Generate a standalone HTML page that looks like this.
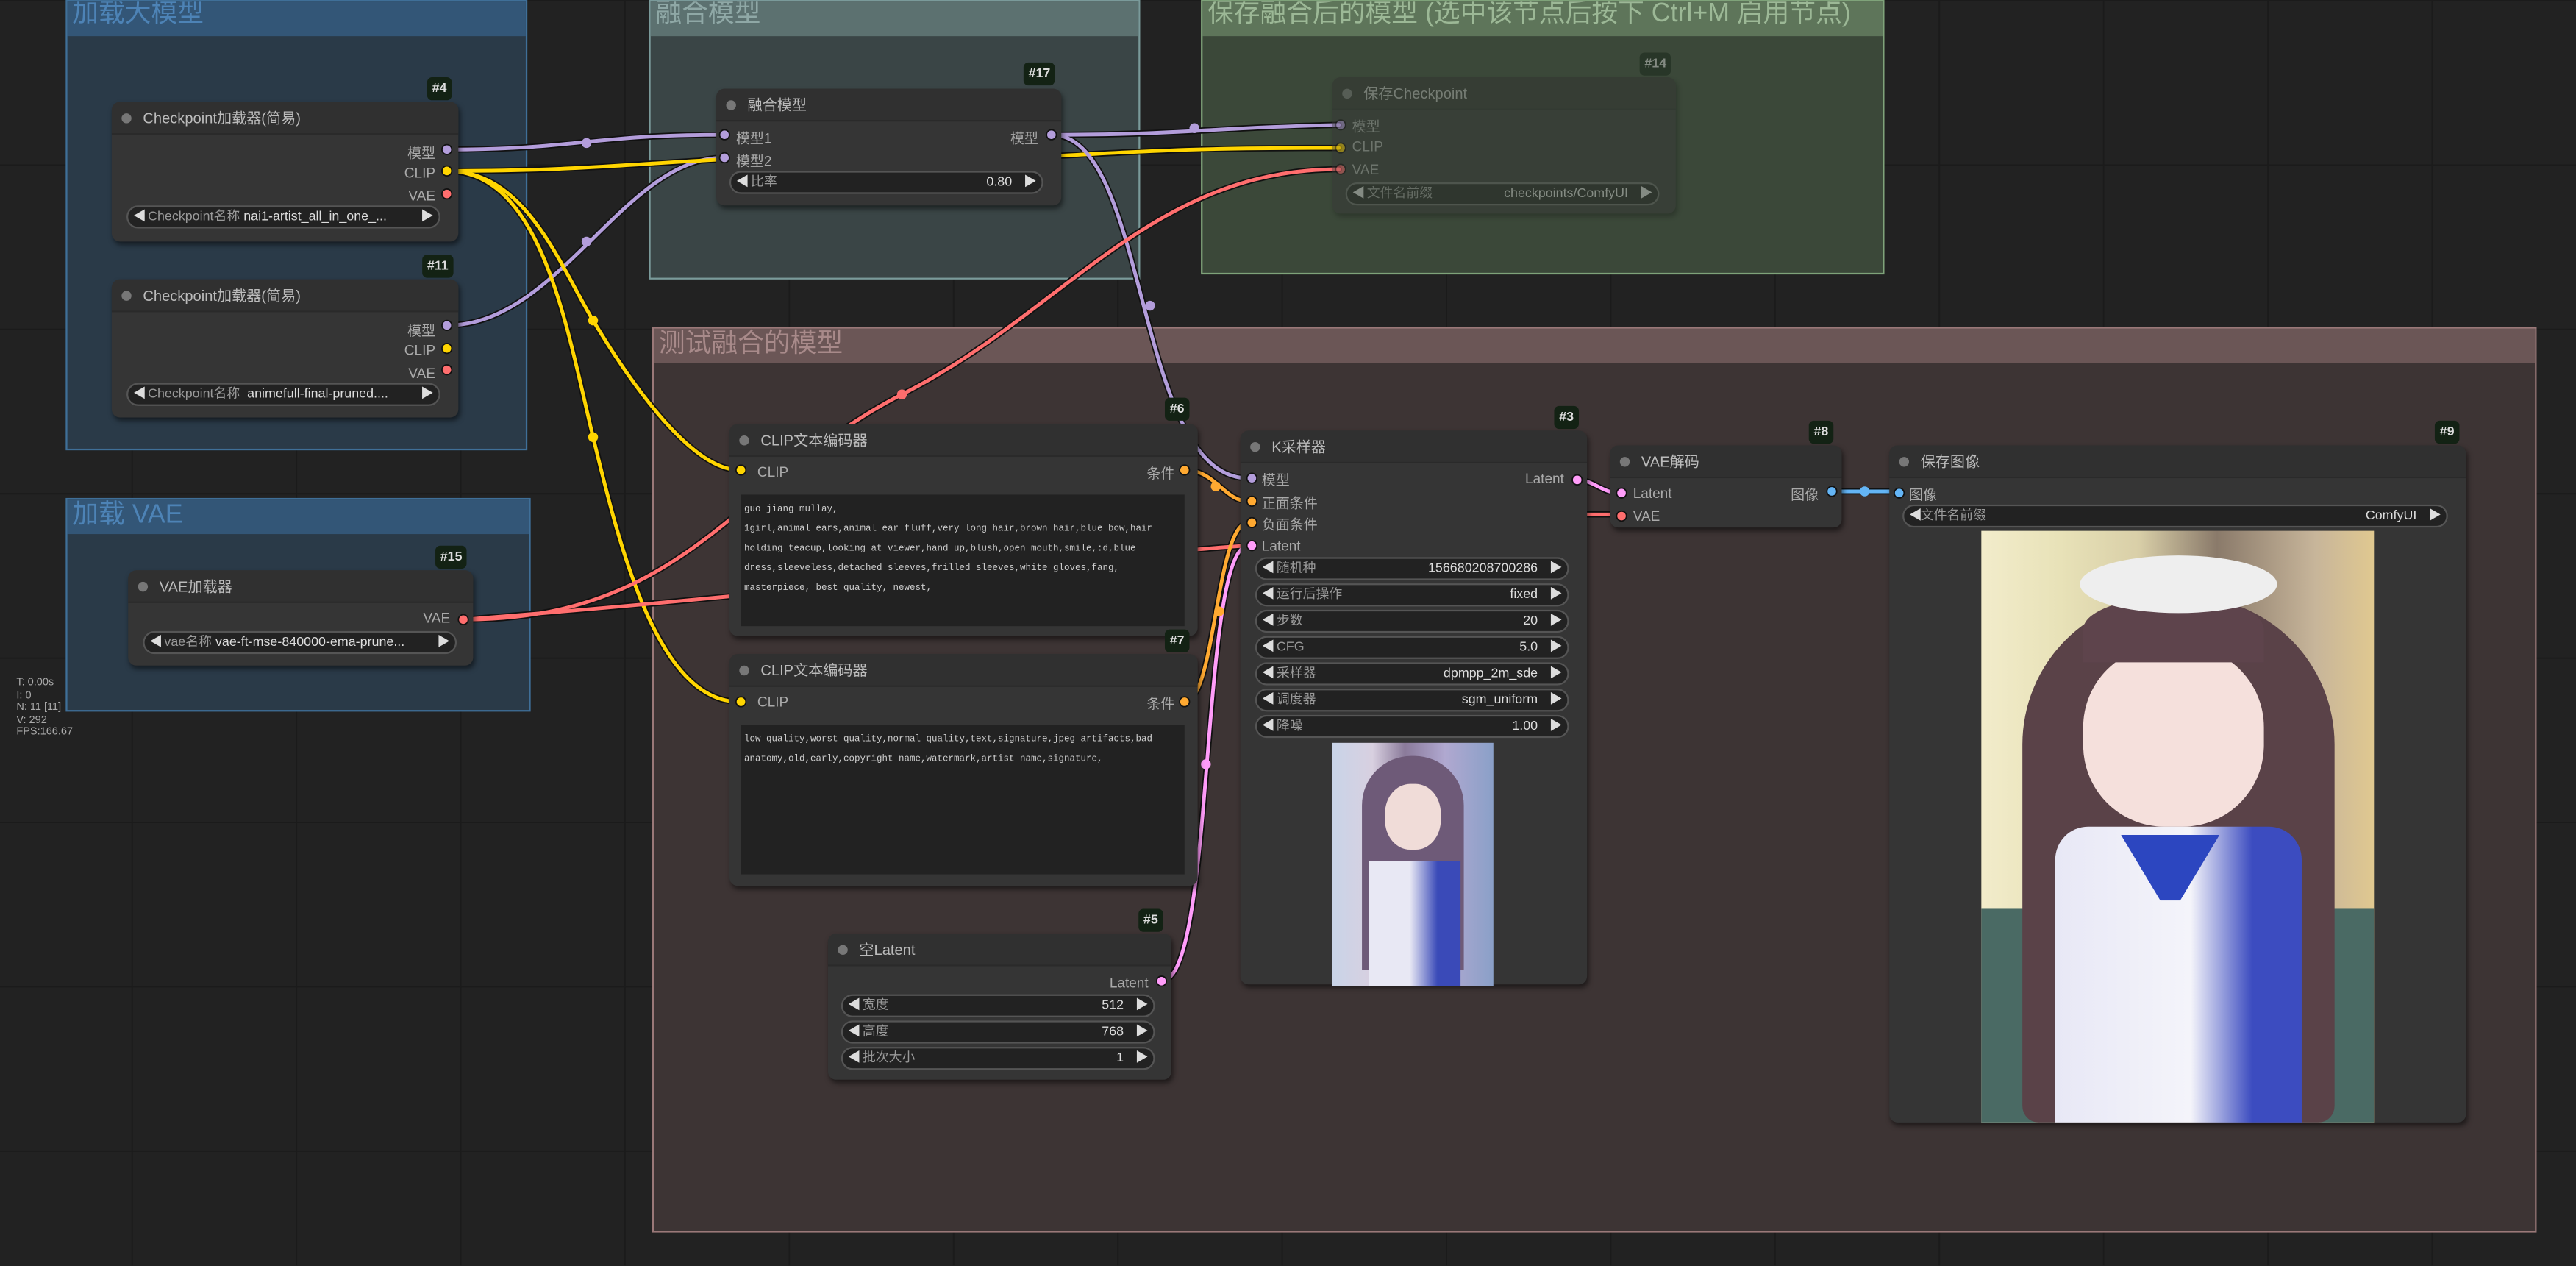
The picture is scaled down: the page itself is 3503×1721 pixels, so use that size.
<!DOCTYPE html>
<html><head><meta charset="utf-8"><style>
*{margin:0;padding:0;box-sizing:border-box}
body{width:3503px;height:1721px;overflow:hidden;background:#222;font-family:"Liberation Sans","Noto Sans CJK SC",sans-serif}
#s{position:absolute;left:0;top:0;width:1568px;height:770px;transform:scale(2.2341);transform-origin:0 0;
background-color:#222;background-image:linear-gradient(#1b1b1b 1px,transparent 1px),linear-gradient(90deg,#1b1b1b 1px,transparent 1px);background-size:100px 100px;background-position:-20px 0}
.a{position:absolute}
.g{position:absolute}
.g .h{height:21px;font-size:16px;line-height:16px;padding-left:3px;white-space:nowrap;overflow:hidden}
.n{position:absolute;background:#353535;border-radius:5px;box-shadow:1px 2px 3px rgba(0,0,0,.5);color:#aaa;font-size:8.5px}
.n .t{height:20px;background:#303030;border-radius:5px 5px 0 0;padding-left:19px;line-height:20px;color:#bbb;font-size:9px;border-bottom:1px solid #2a2a2a;position:relative}
.n .t:before{content:"";position:absolute;left:6px;top:7px;width:6px;height:6px;border-radius:50%;background:#777}
.b{position:absolute;background:#132214;color:#ddd;font-size:8px;font-weight:bold;padding:2px 3px;border-radius:3px;line-height:10px}
.w{position:absolute;height:14px;background:#222;border:1px solid #555;border-radius:7px;font-size:8px;color:#999;line-height:12px;padding:0 12px 0 12px;white-space:nowrap;overflow:hidden}
.w:before{content:"◀";position:absolute;left:3px;color:#ddd;font-size:8px}
.w:after{content:"▶";position:absolute;right:3px;top:0;color:#ddd;font-size:8px}
.w b{font-weight:normal;color:#ddd;position:absolute;right:18px}
.l{position:absolute;font-size:8.5px;color:#aaa;white-space:nowrap}
.tx{position:absolute;background:#222;font-family:"Liberation Mono","Noto Sans CJK SC",monospace;font-size:5.6px;color:#ccc;line-height:12px;padding:3px 2px;overflow:hidden}
</style></head><body><div id="s">
<div class="g" style="left:40px;top:0;width:281px;height:274px;background:#2a3a48;border:1px solid #3f6f98"><div class="h" style="background:#335677;color:#4d83b6">加载大模型</div></div>
<div class="g" style="left:395px;top:0;width:299px;height:170px;background:#3a4546;border:1px solid #7a9a9a"><div class="h" style="background:#5c7170;color:#8fa8a6">融合模型</div></div>
<div class="g" style="left:731px;top:0;width:416px;height:167px;background:#3b4839;border:1px solid #7fa37a"><div class="h" style="background:#5e755a;color:#9cb896">保存融合后的模型 (选中该节点后按下 Ctrl+M 启用节点)</div></div>
<div class="g" style="left:397px;top:199px;width:1147px;height:551px;background:#3d3434;border:1px solid #9a7878"><div class="h" style="background:#6b5656;color:#a88a8a;height:21px;padding-top:2px">测试融合的模型</div></div>
<div class="g" style="left:40px;top:303px;width:283px;height:130px;background:#2a3a48;border:1px solid #3f6f98"><div class="h" style="background:#335677;color:#4d83b6;padding-top:2px">加载 VAE</div></div>
<div class="a" style="left:10px;top:412px;font-size:6.5px;color:#aaa;line-height:7.6px">T: 0.00s<br>I: 0<br>N: 11 [11]<br>V: 292<br>FPS:166.67</div>

<svg class="a" style="left:0;top:0" width="1568" height="770" fill="none" stroke-linecap="round">
<defs>
<path id="p1" d="M272 91C350 91 360 82 440 82"/>
<path id="p2" d="M272 198C340 198 380 96 440 96"/>
<path id="p3" d="M272 104C350 104 380 100 440 97"/>
<path id="p4" d="M272 104C320 104 340 160 361 195S420 286 450 286"/>
<path id="p5" d="M272 104C330 104 345 200 361 266S400 427 450 427"/>
<path id="p6" d="M640 95C700 92 720 90 815 90"/>
<path id="p7" d="M640 82C720 82 730 78 815 76"/>
<path id="p8" d="M640 82C700 82 690 291 760 291"/>
<path id="p9" d="M282 377C420 377 450 290 549 240S700 103 815 103"/>
<path id="p10" d="M282 377C500 360 700 335 760 332"/>
<path id="p11" d="M966 313L986 313"/>
<path id="p12" d="M721 286C740 286 745 305 760 305"/>
<path id="p13" d="M721 427C740 427 740 318 760 318"/>
<path id="p14" d="M707 597C740 597 730 332 760 332"/>
<path id="p15" d="M960 292C970 292 975 300 986 300"/>
<path id="p16" d="M1115 299L1155 299"/>
</defs>
<g stroke="#111" stroke-width="3.8">
<use href="#p1"/><use href="#p2"/><use href="#p3"/><use href="#p4"/><use href="#p5"/><use href="#p6"/><use href="#p7"/><use href="#p8"/><use href="#p9"/><use href="#p10"/><use href="#p11"/><use href="#p12"/><use href="#p13"/><use href="#p14"/><use href="#p15"/><use href="#p16"/>
</g>
<g stroke-width="2.2">
<use href="#p1" stroke="#b39ddb"/><use href="#p2" stroke="#b39ddb"/><use href="#p3" stroke="#ffd500"/><use href="#p4" stroke="#ffd500"/><use href="#p5" stroke="#ffd500"/><use href="#p6" stroke="#ffd500"/><use href="#p7" stroke="#b39ddb"/><use href="#p8" stroke="#b39ddb"/><use href="#p9" stroke="#ff6e6e"/><use href="#p10" stroke="#ff6e6e"/><use href="#p11" stroke="#ff6e6e"/><use href="#p12" stroke="#ffa931"/><use href="#p13" stroke="#ffa931"/><use href="#p14" stroke="#ff9cf9"/><use href="#p15" stroke="#ff9cf9"/><use href="#p16" stroke="#64b5f6"/>
</g>
<g fill="#b39ddb"><circle cx="357" cy="87" r="3"/><circle cx="357" cy="147" r="3"/><circle cx="727" cy="78" r="3"/><circle cx="700" cy="186" r="3"/></g>
<g fill="#ffd500"><circle cx="361" cy="195" r="3"/><circle cx="361" cy="266" r="3"/></g>
<circle cx="549" cy="240" r="3" fill="#ff6e6e"/><circle cx="740" cy="296" r="3" fill="#ffa931"/><circle cx="742" cy="372" r="3" fill="#ffa931"/><circle cx="734" cy="465" r="3" fill="#ff9cf9"/><circle cx="1135" cy="299" r="3" fill="#64b5f6"/>
</svg>

<div class="b" style="left:260px;top:47px">#4</div>
<div class="n" style="left:68px;top:62px;width:211px;height:85px"><div class="t">Checkpoint加载器(简易)</div>
<div class="l" style="right:14px;top:25px">模型</div><div class="l" style="right:14px;top:38px">CLIP</div><div class="l" style="right:14px;top:52px">VAE</div>
<div class="w" style="left:9px;top:63px;width:191px">Checkpoint名称 <span style="color:#ddd">nai1-artist_all_in_one_...</span></div></div>
<div class="b" style="left:257px;top:155px">#11</div>
<div class="n" style="left:68px;top:170px;width:211px;height:84px"><div class="t">Checkpoint加载器(简易)</div>
<div class="l" style="right:14px;top:25px">模型</div><div class="l" style="right:14px;top:38px">CLIP</div><div class="l" style="right:14px;top:52px">VAE</div>
<div class="w" style="left:9px;top:63px;width:191px">Checkpoint名称 &nbsp;<span style="color:#ddd">animefull-final-pruned....</span></div></div>
<div class="b" style="left:623px;top:38px">#17</div>
<div class="n" style="left:436px;top:54px;width:210px;height:71px"><div class="t">融合模型</div>
<div class="l" style="left:12px;top:24px">模型1</div><div class="l" style="left:12px;top:38px">模型2</div><div class="l" style="right:14px;top:24px">模型</div>
<div class="w" style="left:8px;top:50px;width:191px">比率<b>0.80</b></div></div>
<div style="opacity:.45">
<div class="b" style="left:998px;top:32px">#14</div>
<div class="n" style="left:811px;top:47px;width:209px;height:83px"><div class="t">保存Checkpoint</div>
<div class="l" style="left:12px;top:24px">模型</div><div class="l" style="left:12px;top:37px">CLIP</div><div class="l" style="left:12px;top:51px">VAE</div>
<div class="w" style="left:8px;top:64px;width:191px;border-color:#666">文件名前缀<b>checkpoints/ComfyUI</b></div></div></div>
<div class="b" style="left:265px;top:332px">#15</div>
<div class="n" style="left:78px;top:347px;width:210px;height:58px"><div class="t">VAE加载器</div>
<div class="l" style="right:14px;top:24px">VAE</div>
<div class="w" style="left:9px;top:37px;width:191px">vae名称 <span style="color:#ddd">vae-ft-mse-840000-ema-prune...</span></div></div>
<div class="b" style="left:709px;top:242px">#6</div>
<div class="n" style="left:444px;top:258px;width:285px;height:129px"><div class="t">CLIP文本编码器</div>
<div class="l" style="left:17px;top:24px">CLIP</div><div class="l" style="right:14px;top:24px">条件</div>
<div class="tx" style="left:7px;top:43px;width:270px;height:80px">guo jiang mullay,<br>1girl,animal ears,animal ear fluff,very long hair,brown hair,blue bow,hair<br>holding teacup,looking at viewer,hand up,blush,open mouth,smile,:d,blue<br>dress,sleeveless,detached sleeves,frilled sleeves,white gloves,fang,<br>masterpiece, best quality, newest,</div></div>
<div class="b" style="left:709px;top:383px">#7</div>
<div class="n" style="left:444px;top:398px;width:285px;height:141px"><div class="t">CLIP文本编码器</div>
<div class="l" style="left:17px;top:24px">CLIP</div><div class="l" style="right:14px;top:24px">条件</div>
<div class="tx" style="left:7px;top:43px;width:270px;height:91px">low quality,worst quality,normal quality,text,signature,jpeg artifacts,bad<br>anatomy,old,early,copyright name,watermark,artist name,signature,</div></div>
<div class="b" style="left:693px;top:553px">#5</div>
<div class="n" style="left:504px;top:568px;width:209px;height:89px"><div class="t">空Latent</div>
<div class="l" style="right:14px;top:25px">Latent</div>
<div class="w" style="left:8px;top:37px;width:191px">宽度<b>512</b></div>
<div class="w" style="left:8px;top:53px;width:191px">高度<b>768</b></div>
<div class="w" style="left:8px;top:69px;width:191px">批次大小<b>1</b></div></div>
<div class="b" style="left:946px;top:247px">#3</div>
<div class="n" style="left:755px;top:262px;width:211px;height:337px"><div class="t">K采样器</div>
<div class="l" style="left:13px;top:24px">模型</div><div class="l" style="left:13px;top:38px">正面条件</div><div class="l" style="left:13px;top:51px">负面条件</div><div class="l" style="left:13px;top:65px">Latent</div>
<div class="l" style="right:14px;top:24px">Latent</div>
<div class="w" style="left:9px;top:77px;width:191px">随机种<b>156680208700286</b></div>
<div class="w" style="left:9px;top:93px;width:191px">运行后操作<b>fixed</b></div>
<div class="w" style="left:9px;top:109px;width:191px">步数<b>20</b></div>
<div class="w" style="left:9px;top:125px;width:191px">CFG<b>5.0</b></div>
<div class="w" style="left:9px;top:141px;width:191px">采样器<b>dpmpp_2m_sde</b></div>
<div class="w" style="left:9px;top:157px;width:191px">调度器<b>sgm_uniform</b></div>
<div class="w" style="left:9px;top:173px;width:191px">降噪<b>1.00</b></div>
<div class="a" style="left:56px;top:190px;width:98px;height:148px;overflow:hidden;background:linear-gradient(90deg,#c9d4e8,#d8d0e0 25%,#8a7a9a 45%,#b0a8d0 70%,#8aa0c8)">
<div class="a" style="left:18px;top:8px;width:62px;height:130px;border-radius:30px 30px 0 0;background:#6e5a78"></div>
<div class="a" style="left:32px;top:25px;width:34px;height:40px;border-radius:45%;background:#f0dcd8"></div>
<div class="a" style="left:22px;top:72px;width:56px;height:76px;background:linear-gradient(90deg,#e8e8f4 45%,#3a4ab8 75%)"></div></div></div>
<div class="b" style="left:1101px;top:256px">#8</div>
<div class="n" style="left:980px;top:271px;width:141px;height:50px"><div class="t">VAE解码</div>
<div class="l" style="left:14px;top:24px">Latent</div><div class="l" style="left:14px;top:38px">VAE</div><div class="l" style="right:14px;top:24px">图像</div></div>
<div class="b" style="left:1482px;top:256px">#9</div>
<div class="n" style="left:1150px;top:271px;width:351px;height:412px"><div class="t">保存图像</div>
<div class="l" style="left:12px;top:24px">图像</div>
<div class="w" style="left:8px;top:36px;width:332px;padding-left:10px">文件名前缀<b>ComfyUI</b></div>
<div class="a" style="left:56px;top:52px;width:239px;height:360px;overflow:hidden;background:linear-gradient(90deg,#f2eccb,#e8e2b8 20%,#d9cfa8 40%,#8a7a6a 60%,#c7b59a 85%,#e0c890)">
<div class="a" style="left:0;top:230px;width:239px;height:130px;background:#4a6a64"></div>
<div class="a" style="left:25px;top:40px;width:190px;height:320px;border-radius:90px 90px 10px 10px;background:#5a4248"></div>
<div class="a" style="left:62px;top:70px;width:110px;height:110px;border-radius:45%;background:#f5e0dc"></div>
<div class="a" style="left:62px;top:40px;width:110px;height:40px;border-radius:50% 50% 0 0;background:#5e444c"></div>
<div class="a" style="left:60px;top:15px;width:120px;height:35px;border-radius:50%;background:#eee"></div>
<div class="a" style="left:45px;top:180px;width:150px;height:180px;border-radius:20px 20px 0 0;background:linear-gradient(90deg,#e8e8f6,#f4f4fa 55%,#3c4cc0 80%)"></div>
<div class="a" style="left:85px;top:185px;width:60px;height:40px;background:#2c46c0;clip-path:polygon(0 0,100% 0,60% 100%,40% 100%)"></div></div></div>

<svg class="a" style="left:0;top:0" width="1568" height="770">
<g stroke="#111" stroke-width=".8">
<circle cx="272" cy="91" r="3" fill="#b39ddb"/><circle cx="272" cy="104" r="3" fill="#ffd500"/><circle cx="272" cy="118" r="3" fill="#ff6e6e"/>
<circle cx="272" cy="198" r="3" fill="#b39ddb"/><circle cx="272" cy="212" r="3" fill="#ffd500"/><circle cx="272" cy="225" r="3" fill="#ff6e6e"/>
<circle cx="441" cy="82" r="3" fill="#b39ddb"/><circle cx="441" cy="96" r="3" fill="#b39ddb"/><circle cx="640" cy="82" r="3" fill="#b39ddb"/>
<circle cx="282" cy="377" r="3" fill="#ff6e6e"/>
<circle cx="451" cy="286" r="3" fill="#ffd500"/><circle cx="721" cy="286" r="3" fill="#ffa931"/>
<circle cx="451" cy="427" r="3" fill="#ffd500"/><circle cx="721" cy="427" r="3" fill="#ffa931"/>
<circle cx="707" cy="597" r="3" fill="#ff9cf9"/>
<circle cx="762" cy="291" r="3" fill="#b39ddb"/><circle cx="762" cy="305" r="3" fill="#ffa931"/><circle cx="762" cy="318" r="3" fill="#ffa931"/><circle cx="762" cy="332" r="3" fill="#ff9cf9"/><circle cx="960" cy="292" r="3" fill="#ff9cf9"/>
<circle cx="987" cy="300" r="3" fill="#ff9cf9"/><circle cx="987" cy="314" r="3" fill="#ff6e6e"/><circle cx="1115" cy="299" r="3" fill="#64b5f6"/><circle cx="1156" cy="300" r="3" fill="#64b5f6"/>
</g>
<g opacity=".45" stroke="#111" stroke-width=".8"><circle cx="816" cy="76" r="3" fill="#b39ddb"/><circle cx="816" cy="90" r="3" fill="#ffd500"/><circle cx="816" cy="103" r="3" fill="#ff6e6e"/></g>
</svg>
</div></body></html>
